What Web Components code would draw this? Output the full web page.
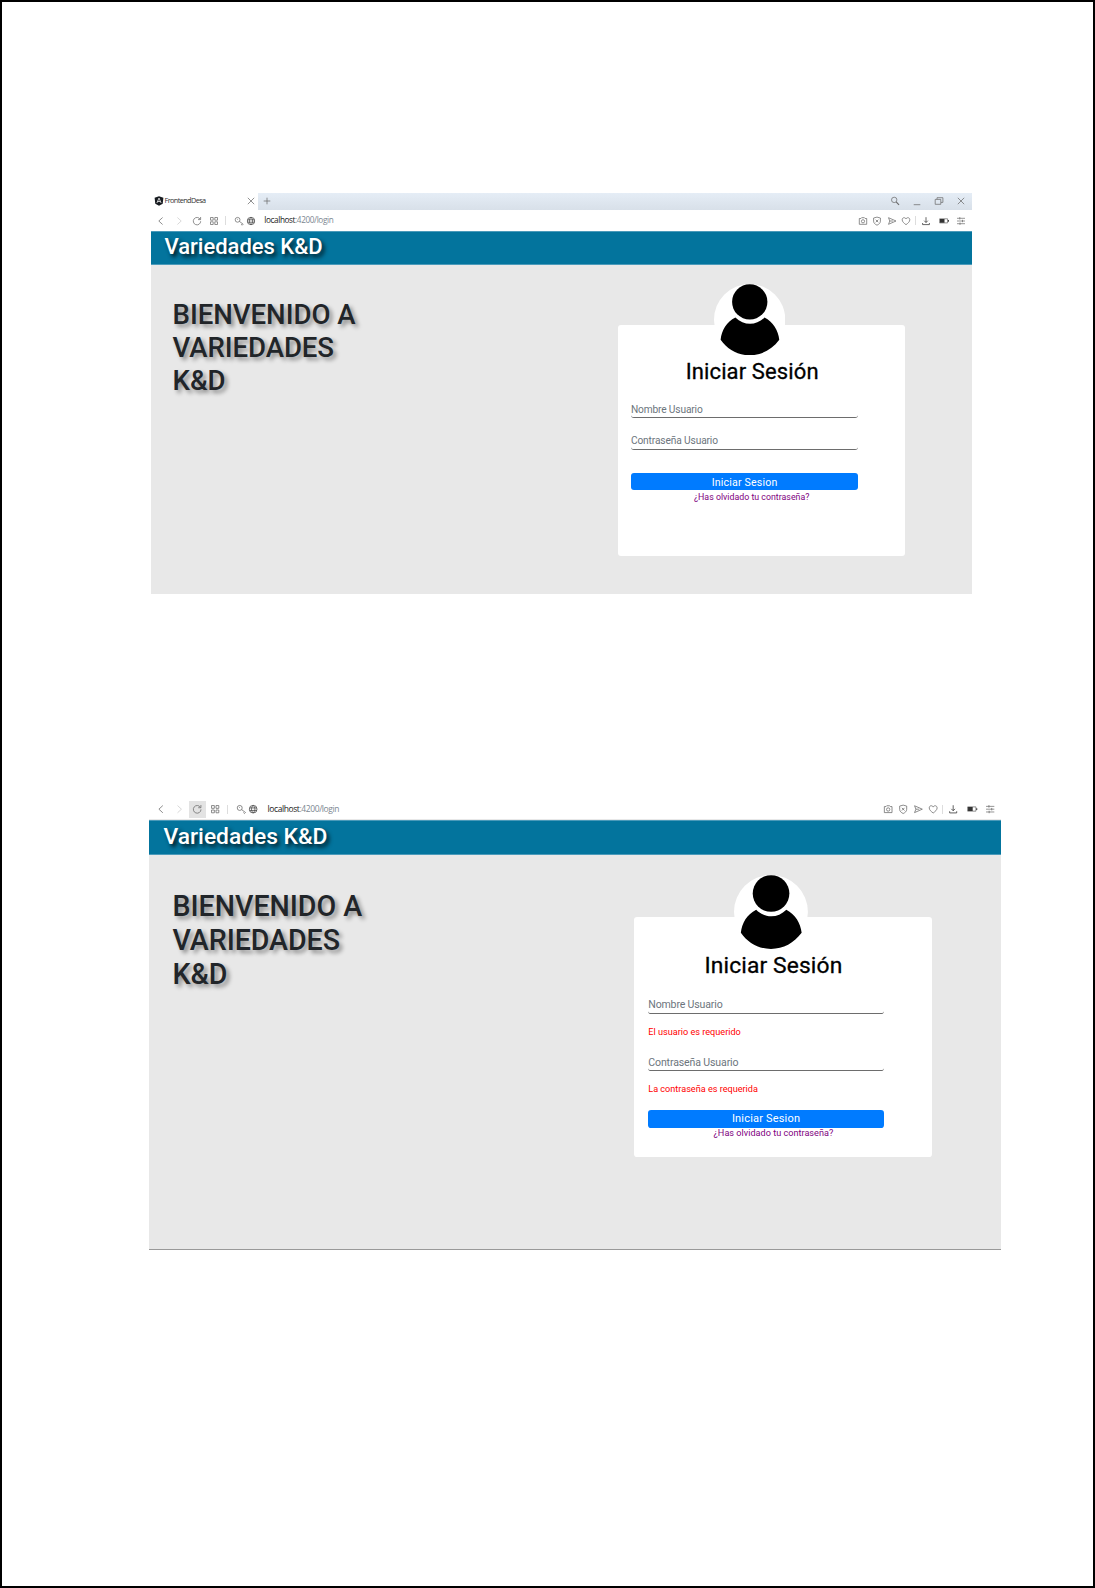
<!DOCTYPE html>
<html lang="es">
<head>
<meta charset="utf-8">
<title>Variedades K&amp;D</title>
<style>
html,body{margin:0;padding:0;background:#fff}
body{font-family:Roboto,"Liberation Sans",sans-serif}
</style>
</head>
<body>
<doc-page>
  <browser-window class="first" tabs>
    <login-page></login-page>
  </browser-window>
  <browser-window class="second" reloading>
    <login-page errors></login-page>
  </browser-window>
</doc-page>
<script>
const define = (name, html, setup) => customElements.define(name, class extends HTMLElement {
  connectedCallback() {
    if (this.shadowRoot) return;
    const t = document.createElement('template');
    t.innerHTML = typeof html === 'function' ? html(this) : html;
    this.attachShadow({mode: 'open'}).append(t.content.cloneNode(true));
    if (setup) setup(this);
  }
});

define('doc-page', `<style>
:host{display:flex;flex-direction:column;box-sizing:border-box;width:1095px;height:1588px;border:2px solid #000;background:#fff;padding:191px 0 0 148px;align-items:flex-start;overflow:hidden}
::slotted(.first){--s:1;width:821.500px;height:401px;margin-left:.5px}
::slotted(.second){--s:1.0365;width:852px;height:449px;margin-top:207px;margin-left:-1px}
</style><slot></slot>`);

const icons = {
  back: '<path d="M6.6 1.5 2.8 5l3.8 3.5"/>',
  fwd: '<path d="M3.4 1.5 7.2 5 3.4 8.5" stroke="#ccc"/>',
  reload: '<path d="M8.2 3.3A3.7 3.7 0 1 0 8.7 5.2M8.6 1v2.6H6"/>',
  grid: '<path d="M1.5 1.5h2.7v2.7H1.5zM5.8 1.5h2.7v2.7H5.8zM1.5 5.8h2.7v2.7H1.5zM5.8 5.8h2.7v2.7H5.8z"/>',
  key: '<circle cx="3.6" cy="3.8" r="2.4"/><path d="m5.400 5.400 3.800 2.800-1 1-1.100-1"/><path d="M3 3.300h.8"/>',
  globe: '<circle cx="5" cy="5" r="3.700" stroke="#444"/><path stroke="#444" d="M1.500 3.800h7M1.500 6.200h7M5 1.300C2.800 3.700 2.800 6.300 5 8.700 7.200 6.300 7.200 3.700 5 1.300"/>',
  camera: '<path d="M1.300 2.500h1.600l.7-.8h2.800l.7.8h1.600v5.800H1.300z"/><circle cx="5" cy="5.300" r="1.600"/>',
  shield: '<path d="M5 1.100 8.400 2v3.100c0 2-1.500 3.200-3.400 4.100C3.100 8.300 1.600 7.100 1.600 5.100V2z"/><path d="m3.700 3.700 2.600 2.600M6.300 3.700 3.700 6.300"/>',
  send: '<path d="M1.500 1.700 9 5 1.500 8.300 2.800 5zM2.800 5H6"/>',
  heart: '<path d="M5 8.700C3 7.200 1.200 5.700 1.200 3.800 1.200 1.300 4.200 1 5 3c.8-2 3.800-1.700 3.800.8C8.800 5.700 7 7.200 5 8.700z"/>',
  down: '<path stroke="#333" d="M5 1.200v5.200M3.200 4.700 5 6.500l1.800-1.800M1.600 7v1.600h6.800V7"/>',
  battery: '<path d="M.6 2.800h8v4.100h-8z"/><path fill="#333" stroke="none" d="M1 3h4.500v3.700H1zM8.900 4h1v1.700h-1z"/>',
  sliders: '<path d="M1 2.300h8M1 5h8M1 7.700h8" stroke-width=".7"/><path d="M3.800 1.100v2.400M6.500 3.800v2.400M4 6.500v2.400"/>',
  close: '<path d="m1.800 1.800 6.400 6.400M8.200 1.800 1.800 8.200"/>',
  plus: '<path d="M5 1.700v6.600M1.700 5h6.600"/>',
  search: '<circle cx="4.200" cy="3.900" r="2.700"/><path d="M6.200 5.900 9 8.800" stroke-width="1.200"/>',
  min: '<path d="M1.700 8.700h6.600"/>',
  restore: '<path d="M1.200 3.400h5.600v4.900H1.200zM3 3.200V1.700h5.900v4.700H7"/>',
  angular: '<path d="M5 .3 9.400 1.800 8.700 7.700 5 9.800 1.300 7.700.6 1.800z" fill="#171b20" stroke="none"/><path d="M2.900 7 5 2l2.100 5M3.700 5.500h2.600" stroke="#fff"/>'
};
define('ui-icon', el => `<style>
:host{display:block;flex:none;width:calc(10px*var(--s));height:calc(10px*var(--s))}
svg{display:block;width:100%;height:100%;overflow:visible}
</style><svg viewBox="0 0 10 10" fill="none" stroke="#6c6c6c" stroke-width=".75">${icons[el.getAttribute('name')]}</svg>`);

/* Tracks its text so the line spans the nominal width, times the window's scale. */
define('fit-text', `<style>:host{display:inline-block;white-space:nowrap}</style><slot></slot>`, el => {
  const s = parseFloat(getComputedStyle(el).getPropertyValue('--s')) || 1;
  const n = el.textContent.length;
  const gap = el.getAttribute('w') * s - el.getBoundingClientRect().width;
  el.style.letterSpacing = (gap / n).toFixed(3) + 'px';
});

define('tab-strip', `<style>
:host{display:flex;height:17px;background:linear-gradient(#e5edf6,#d8e0e9);align-items:stretch;font:7.300px/1.3 "Open Sans",sans-serif;color:#333}
.tab{display:flex;align-items:center;background:#fff;width:107.500px;box-sizing:border-box;padding:0 2px 1px 3.500px}
.tab fit-text{margin-left:.5px}
.tab .x{margin-left:auto}
.plus{margin:2.500px 0 0 4.300px}
.controls{display:flex;margin:2.500px 6px 0 auto;gap:12px}
</style>
<div class="tab"><ui-icon name="angular"></ui-icon><fit-text w="41">FrontendDesa</fit-text><ui-icon class="x" name="close"></ui-icon></div>
<ui-icon class="plus" name="plus"></ui-icon>
<div class="controls"><ui-icon name="search"></ui-icon><ui-icon name="min"></ui-icon><ui-icon name="restore"></ui-icon><ui-icon name="close"></ui-icon></div>`);

define('address-bar', el => {
  const ic = (n, m, c = '') => `<ui-icon class="${c}" name="${n}" style="margin-left:calc(${m}px*var(--s))"></ui-icon>`;
  const sep = m => `<i style="margin-left:calc(${m}px*var(--s))"></i>`;
  const r = el.hasAttribute('reloading');
  return `<style>
:host{display:flex;align-items:center;background:#fff;font:calc(8.200px*var(--s))/1 "Open Sans",sans-serif;color:#7c8791}
i{width:1px;height:calc(9px*var(--s));background:#ddd}
.lit{background:#e3e3e3;box-shadow:0 0 0 3px #e3e3e3}
.url{margin-left:calc(8.500px*var(--s))}
b{font-weight:400;color:#222}
.right{display:flex;align-items:center;margin-left:auto;margin-right:calc(${r ? 5.6 : 6}px*var(--s))}
</style>
${ic('back', r ? 6.5 : 5.8)}${ic('fwd', 7.8)}${ic('reload', 7.5, r ? 'lit' : '')}${ic('grid', 7.5)}${sep(5.700)}${ic('key', 8)}${ic('globe', 2)}
<fit-text class="url" w="69"><b>localhost</b>:4200/login</fit-text>
<div class="right">${ic('camera', 0)}${ic('shield', 4.3)}${ic('send', 4.7)}${ic('heart', 4)}${sep(4)}${ic('down', 4.5)}${ic('battery', 8)}${ic('sliders', 7.5)}</div>`;
});

define('browser-window', el => `<style>
:host{display:flex;flex-direction:column;background:#e8e8e8;box-sizing:border-box}
:host([reloading]){border-bottom:1px solid #999}
address-bar{height:21px}
:host([reloading]) address-bar{height:19px;transform:translateY(-1px)}
</style>
${el.hasAttribute('tabs') ? '<tab-strip></tab-strip>' : ''}
<address-bar ${el.hasAttribute('reloading') ? 'reloading' : ''}></address-bar>
<slot></slot>`);

define('user-avatar', `<style>
:host{display:block;width:calc(71.300px*var(--s));height:calc(71.300px*var(--s))}
svg{display:block;width:100%;height:100%}
</style><svg viewBox="0 0 71 71"><circle cx="35.500" cy="35.500" r="35.500" fill="#fff"/><circle cx="35.600" cy="17.800" r="17.600"/><path d="M21.300 33.300C12.500 37.800 7.500 46 6.600 55.500 13.500 65.300 23.500 71 35.500 71S57.700 65.300 65 55.500C64 46 58.800 37.800 50.300 33.300 42 41.700 29.800 41.700 21.300 33.300z"/></svg>`);

define('form-field', `<style>
:host{display:block;box-sizing:border-box;width:calc(227.300px*var(--s));height:calc(17px*var(--s));border-bottom:1px solid #6d6d6d;border-radius:calc(3px*var(--s));font-size:calc(10.200px*var(--s));line-height:calc(var(--lh,17.500px)*var(--s));color:#6c757d}
</style><slot></slot>`);

define('login-card', el => {
  const e = el.hasAttribute('errors');
  return `<style>
:host{display:flex;flex-direction:column;align-items:flex-start;position:relative;box-sizing:border-box;background:#fff;width:calc(287.300px*var(--s));height:calc(231px*var(--s));border-radius:calc(3px*var(--s));padding:calc(33.200px*var(--s)) 0 0 calc(${e ? 13.7 : 13.4}px*var(--s))}
user-avatar{position:absolute;left:calc(96.100px*var(--s));top:calc(-41px*var(--s))}
h2{margin:0 0 calc(16.800px*var(--s)) calc(${e ? 54.3 : 54.8}px*var(--s));font-weight:400;-webkit-text-stroke:.3px #000;font-size:calc(22px*var(--s));line-height:calc(${e ? 26.4 : 28}px*var(--s));color:#000;height:calc(26px*var(--s))}
.f2{margin-top:calc(${e ? 14.9 : 15}px*var(--s));--lh:16.500px}
.err{margin-top:calc(11.600px*var(--s));height:calc(12px*var(--s));line-height:calc(12px*var(--s));font-size:calc(8.800px*var(--s));color:#f00}
button{display:block;border:0;padding:0;margin-top:calc(${e ? 13.7 : 23.3}px*var(--s));width:calc(227.300px*var(--s));height:calc(17px*var(--s));line-height:calc(${e ? 18.3 : 19}px*var(--s));border-radius:calc(3px*var(--s));background:#007bff;color:#fff;font-family:inherit;font-size:calc(10.600px*var(--s));text-align:center}
a{display:block;margin:calc(${e ? .9 : 2}px*var(--s)) 0 0 calc(63px*var(--s));font-size:calc(8.800px*var(--s));line-height:calc(10px*var(--s));color:purple}
</style>
<user-avatar></user-avatar>
<h2><fit-text w="133">Iniciar Sesión</fit-text></h2>
<form-field><fit-text w="71.700">Nombre Usuario</fit-text></form-field>
${e ? '<div class="err"><fit-text w="89.300">El usuario es requerido</fit-text></div>' : ''}
<form-field class="f2"><fit-text w="87">Contraseña Usuario</fit-text></form-field>
${e ? '<div class="err"><fit-text w="105.800">La contraseña es requerida</fit-text></div>' : ''}
<button><fit-text w="65.800">Iniciar Sesion</fit-text></button>
<a><fit-text w="115.500">¿Has olvidado tu contraseña?</fit-text></a>`;
});

define('login-page', el => {
  const e = el.hasAttribute('errors');
  return `<style>
:host{display:flex;flex-direction:column;flex:1;background:#e8e8e8}
header{box-sizing:border-box;height:calc(34px*var(--s));background:#03749d;border:solid #4a9aba;border-width:1px 0;padding-left:calc(14.100px*var(--s));font-weight:500;font-size:calc(22px*var(--s));line-height:calc(30.500px*var(--s));color:#fff;text-shadow:calc(2.500px*var(--s)) calc(2.500px*var(--s)) 4px rgba(0,0,0,.85)}
main{display:flex;align-items:flex-start}
h1{margin:calc(${e ? 32.2 : 32.9}px*var(--s)) 0 0 calc(${e ? 22.7 : 22}px*var(--s));width:calc(${e ? 445.3 : 445}px*var(--s));font-weight:500;font-size:calc(27.600px*var(--s));line-height:calc(33px*var(--s));color:#212529;text-shadow:calc(3px*var(--s)) calc(3px*var(--s)) 4px rgba(0,0,0,.4)}
h1 fit-text{display:block;width:max-content}
login-card{margin-top:calc(60px*var(--s))}
</style>
<header><fit-text w="158">Variedades K&amp;D</fit-text></header>
<main>
<h1><fit-text w="183">BIENVENIDO A</fit-text><fit-text w="161.500">VARIEDADES</fit-text><fit-text w="53">K&amp;D</fit-text></h1>
<login-card ${e ? 'errors' : ''}></login-card>
</main>`;
});
</script>
</body>
</html>
